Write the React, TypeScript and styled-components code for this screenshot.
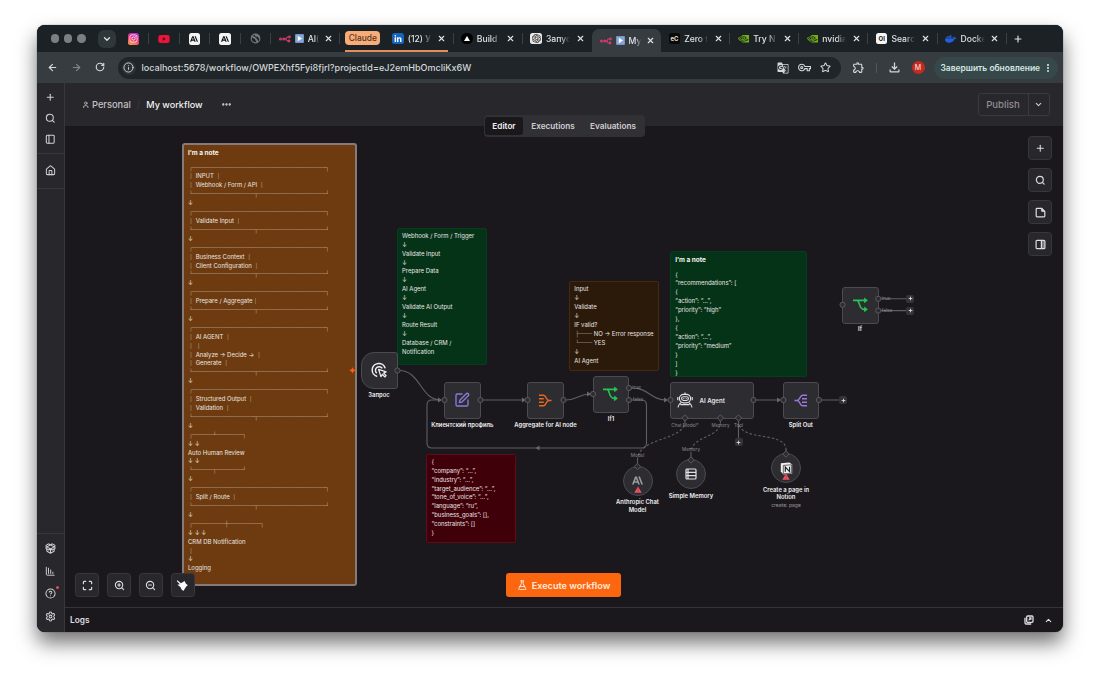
import type { ReactNode } from "react";
import styled, { createGlobalStyle, css } from "styled-components";
import {
  ArrowLeft,
  ArrowRight,
  ChartColumnDecreasing,
  ChevronDown,
  ChevronUp,
  CircleQuestionMark,
  Ellipsis,
  EllipsisVertical,
  FlaskConical,
  House,
  Info,
  Maximize,
  PackageOpen,
  PanelLeft,
  Plus,
  RotateCw,
  Search,
  Settings,
  SquarePen,
  Star,
  User,
  X,
  ZoomIn,
  ZoomOut,
} from "lucide-react";
import { FaDocker, FaInstagram, FaLinkedinIn, FaYoutube } from "react-icons/fa";
import { MdGTranslate, MdOutlineExtension, MdOutlineFileDownload, MdOutlineVpnKey } from "react-icons/md";
import { SiAnthropic, SiNvidia, SiOpenai } from "react-icons/si";

const GlobalStyle = createGlobalStyle`
  * {
    box-sizing: border-box;
  }

  body {
    margin: 0;
    background: #ffffff;
    font-family: Inter, "Noto Sans", sans-serif;
    overflow: hidden;
  }

  svg {
    display: block;
    flex-shrink: 0;
  }
`;

const Desktop = styled.div`
  width: 1100px;
  height: 681px;
  padding: 25px 37px 49px;
`;

const Window = styled.div`
  display: flex;
  flex-direction: column;
  height: 607px;
  border-radius: 8px;
  overflow: hidden;
  background: #1a181c;
  box-shadow: 0 0 1px rgba(0, 0, 0, 0.8), 0 11px 20px rgba(0, 0, 0, 0.55);
`;

/* browser tabs */

const TabBar = styled.div`
  display: flex;
  align-items: center;
  height: 27px;
  padding-left: 13.5px;
  background: #1b2124;
  color: #dfe3e5;
`;

const TrafficLights = styled.div`
  display: flex;
  gap: 4.8px;
  margin-right: 12px;
`;

const Light = styled.span`
  width: 8.6px;
  height: 8.6px;
  border-radius: 50%;
  background: #7b7f81;
`;

const TabSearch = styled.div`
  display: grid;
  place-items: center;
  width: 18px;
  height: 18px;
  margin-right: 2.8px;
  border-radius: 6px;
  background: #30373a;
`;

const PinnedTab = styled.div`
  display: grid;
  place-items: center;
  width: 30.5px;
  height: 11px;
  border-right: 1px solid #3a4144;
`;

const Tab = styled.div<{ $active?: boolean; $divider?: boolean }>`
  position: relative;
  display: flex;
  align-items: center;
  flex-shrink: 0;
  width: 69.1px;
  height: ${({ $active }) => ($active ? "23px" : "11px")};
  margin-top: ${({ $active }) => ($active ? "4px" : "0")};
  padding-left: 7.5px;
  border-right: 1px solid ${({ $divider }) => ($divider ? "#3a4144" : "transparent")};

  ${({ $active }) =>
    $active &&
    css`
      border-radius: 7px 7px 0 0;
      background: #363c40;
      border-right: 0;
    `}
`;

const TabTitle = styled.span<{ $width: number }>`
  width: ${({ $width }) => $width}px;
  margin-left: 4px;
  overflow: hidden;
  white-space: nowrap;
  font-size: 8.6px;
  font-weight: 500;
  line-height: 12px;
  mask-image: linear-gradient(90deg, #000 60%, transparent);
`;

const TabClose = styled.span`
  margin-left: auto;
  margin-right: 6.5px;
`;

const TabGroup = styled.div`
  position: relative;
  display: flex;
  align-items: center;
  height: 27px;

  &::after {
    content: "";
    position: absolute;
    left: 5px;
    right: 6px;
    bottom: 0.5px;
    height: 1.5px;
    background: #dc905b;
  }
`;

const GroupChip = styled.span`
  margin: 0 4.5px 1px 5px;
  width: 35px;
  height: 14.5px;
  border-radius: 4px;
  background: #f8ac77;
  color: #54341f;
  font-size: 8.4px;
  font-weight: 500;
  line-height: 14.5px;
  text-align: center;
`;

const Favicon = styled.span<{ $bg: string; $color?: string; $round?: boolean }>`
  display: grid;
  place-items: center;
  flex-shrink: 0;
  width: 11.5px;
  height: 11.5px;
  border-radius: ${({ $round }) => ($round ? "50%" : "2.5px")};
  background: ${({ $bg }) => $bg};
  color: ${({ $color }) => $color ?? "#111"};
  font-size: 6px;
  font-weight: 700;
`;

const FaviconPair = styled.span`
  display: flex;
  align-items: center;
  gap: 4px;
`;

const NewTab = styled.span`
  margin-left: 6px;
`;

/* browser toolbar */

const Toolbar = styled.div`
  display: flex;
  align-items: center;
  height: 31px;
  background: #363c40;
  color: #d3d8da;
`;

const NavButtons = styled.div`
  display: flex;
  gap: 13px;
  padding-left: 9.5px;
  width: 81px;
`;

const AddressBar = styled.div`
  display: flex;
  align-items: center;
  width: 723px;
  height: 22px;
  padding: 0 10px 0 3.5px;
  border-radius: 11px;
  background: #1f2528;
`;

const SiteInfo = styled.span`
  display: grid;
  place-items: center;
  width: 14px;
  height: 14px;
  border-radius: 50%;
  background: #2c3336;
`;

const Url = styled.span`
  margin-left: 6px;
  margin-right: auto;
  font-size: 9.04px;
  font-weight: 500;
  line-height: 14px;
`;

const AddressActions = styled.div`
  display: flex;
  align-items: center;
  gap: 9px;
`;

const Extensions = styled.span`
  margin-left: 11px;
`;

const ToolbarDivider = styled.span`
  width: 1px;
  height: 10px;
  margin: 0 10.5px;
  background: #50575a;
`;

const Avatar = styled.span`
  display: grid;
  place-items: center;
  width: 13px;
  height: 13px;
  margin: 0 9px 0 9.5px;
  border-radius: 50%;
  background: #c52b1d;
  color: #f6d9d4;
  font-size: 7px;
  font-weight: 500;
`;

const UpdateChip = styled.div`
  display: flex;
  align-items: center;
  justify-content: space-between;
  width: 124.5px;
  height: 22px;
  padding: 0 5px 0 7px;
  border-radius: 11px;
  background: #364849;
  color: #d5e6e5;
  font-size: 8.45px;
  font-weight: 600;
  white-space: nowrap;
`;

/* application */

const AppShell = styled.div`
  display: flex;
  flex: 1;
  min-height: 0;
`;

const Sidebar = styled.nav`
  display: flex;
  flex-direction: column;
  justify-content: space-between;
  width: 28px;
  border-right: 1px solid #38373b;
  background: #28272b;
  color: #d0cfd3;
`;

const SidebarGroup = styled.div<{ $gap: number; $pad: string; $bottom?: boolean }>`
  display: flex;
  flex-direction: column;
  align-items: center;
  gap: ${({ $gap }) => $gap}px;
  padding: ${({ $pad }) => $pad};
  border: 0 solid #38373b;
  border-width: ${({ $bottom }) => ($bottom ? "1px 0 0" : "0 0 1px")};
`;

const HelpItem = styled.span`
  position: relative;

  &::after {
    content: "";
    position: absolute;
    top: -2.5px;
    right: -3px;
    width: 3px;
    height: 3px;
    border-radius: 50%;
    background: #e24a62;
  }
`;

const Main = styled.main`
  display: flex;
  flex: 1;
  flex-direction: column;
  min-width: 0;
`;

const Header = styled.header`
  position: relative;
  z-index: 2;
  display: flex;
  align-items: center;
  height: 43px;
  padding: 0 13.5px 0 16.5px;
  background: #28272b;
  color: #dcdbde;
  font-size: 9.6px;
  font-weight: 500;
`;

const Crumb = styled.span<{ $dim?: boolean }>`
  display: flex;
  align-items: center;
  gap: 3px;
  color: ${({ $dim }) => ($dim ? "#c3c2c6" : "#f1f1f2")};
  font-size: ${({ $dim }) => ($dim ? "9.3px" : "9.1px")};
`;

const CrumbSlash = styled.span`
  width: 15.5px;
  color: #38373b;
  text-align: center;
`;

const MoreButton = styled.span`
  margin-left: 18px;
  color: #dddddf;
`;

const PublishButton = styled.div`
  display: grid;
  grid-template-columns: 49px 21px;
  height: 23px;
  margin-left: auto;
  border: 1px solid #3b3a3e;
  border-radius: 3px;
  color: #8f8e93;

  & > span {
    display: grid;
    place-items: center;
  }

  & > span + span {
    border-left: 1px solid #3b3a3e;
    color: #cfced2;
  }
`;

const ViewSwitch = styled.div`
  position: absolute;
  top: 32px;
  left: 418.5px;
  display: flex;
  height: 21.5px;
  padding: 1.5px;
  border-radius: 4px;
  background: #313035;
`;

const ViewOption = styled.span<{ $width: number; $active?: boolean }>`
  width: ${({ $width }) => $width}px;
  border-radius: 3px;
  background: ${({ $active }) => ($active ? "#19181b" : "transparent")};
  color: ${({ $active }) => ($active ? "#f3f3f4" : "#cfced1")};
  font-size: 8.2px;
  font-weight: 600;
  line-height: 18.5px;
  text-align: center;
`;

const Canvas = styled.section`
  position: relative;
  flex: 1;
  overflow: hidden;
  background: #1a181c;
`;

/* the diagram is panned by the place of the canvas in the screen */
const Viewport = styled.div`
  position: absolute;
  inset: 0;
  width: 1100px;
  height: 681px;
  transform: translate(-65px, -126px);
`;

const EdgeLayer = styled.svg`
  position: absolute;
  inset: 0;
  pointer-events: none;
`;

interface BoxProps {
  $x: number;
  $y: number;
  $w: number;
  $h: number;
}

const placed = css<BoxProps>`
  position: absolute;
  left: ${({ $x }) => $x}px;
  top: ${({ $y }) => $y}px;
  width: ${({ $w }) => $w}px;
  height: ${({ $h }) => $h}px;
`;

const Sticky = styled.div<BoxProps & { $bg: string; $border: string; $selected?: boolean; $padTop: number }>`
  ${placed}
  padding: ${({ $padTop }) => $padTop}px 0 0 ${({ $selected }) => ($selected ? "4px" : "4.3px")};
  border: ${({ $selected }) => ($selected ? "2px" : "1px")} solid ${({ $border }) => $border};
  border-radius: ${({ $selected }) => ($selected ? "3px" : "2px")};
  background: ${({ $bg }) => $bg};
  color: #ebe6e3;
`;

const StickyTitle = styled.div`
  height: 14.75px;
  color: #f8f5f2;
  font-size: 6.5px;
  font-weight: 700;
  line-height: 8.91px;
`;

const StickyLine = styled.div`
  height: 8.91px;
  overflow: visible;
  font-size: 5.96px;
  line-height: 8.91px;
  white-space: pre;
`;

const BoxGlyphs = styled.span`
  font-family: "Noto Sans CJK SC", sans-serif;
  font-size: 5.94px;
  font-weight: 500;
  line-height: 0;
`;

const NodeCard = styled.div<BoxProps & { $trigger?: boolean; $round?: boolean; $wide?: boolean }>`
  ${placed}
  display: flex;
  align-items: center;
  justify-content: ${({ $wide }) => ($wide ? "flex-start" : "center")};
  gap: 6.5px;
  padding-left: ${({ $wide }) => ($wide ? "6px" : "0")};
  border: 1.5px solid #4c4b4f;
  border-radius: ${({ $trigger, $round }) => ($round ? "50%" : $trigger ? "13px 3px 3px 13px" : "3px")};
  background: #2d2c30;
  color: #e6e6e8;
  font-size: 6.1px;
  font-weight: 600;
`;

const NodeLabel = styled.div<{ $x: number; $y: number }>`
  position: absolute;
  left: ${({ $x }) => $x - 45}px;
  top: ${({ $y }) => $y}px;
  width: 90px;
  color: #efeff1;
  font-size: 5.88px;
  font-weight: 600;
  line-height: 7.2px;
  text-align: center;
  white-space: pre-line;
`;

const NodeSubtitle = styled.div`
  margin-top: 1.4px;
  color: #98979c;
  font-size: 5px;
  font-weight: 400;
`;

const PortLabel = styled.span<{ $x: number; $y: number }>`
  position: absolute;
  left: ${({ $x }) => $x}px;
  top: ${({ $y }) => $y}px;
  transform: translate(-50%, -50%);
  color: #8b8a8f;
  font-size: 4.6px;
  line-height: 6px;
  white-space: nowrap;
`;

const AddPort = styled.span<{ $x: number; $y: number }>`
  position: absolute;
  left: ${({ $x }) => $x - 4}px;
  top: ${({ $y }) => $y - 4}px;
  display: grid;
  place-items: center;
  width: 8px;
  height: 8px;
  border-radius: 2px;
  background: #343337;
  color: #e2e2e4;
`;

const WarningMark = styled.svg`
  position: absolute;
  left: 50%;
  bottom: 2px;
  transform: translateX(-50%);
`;

const ControlColumn = styled.div`
  position: absolute;
  top: 10px;
  right: 11px;
  display: flex;
  flex-direction: column;
  gap: 8px;
`;

const ControlRow = styled.div`
  position: absolute;
  left: 10.4px;
  bottom: 10px;
  display: flex;
  gap: 7.8px;
`;

const ControlButton = styled.span`
  display: grid;
  place-items: center;
  width: 24px;
  height: 24px;
  border: 1px solid #38373b;
  border-radius: 3.5px;
  background: #28272b;
  color: #dddde0;
`;

const ExecuteButton = styled.div`
  position: absolute;
  left: 441px;
  bottom: 10px;
  display: flex;
  align-items: center;
  justify-content: center;
  gap: 4.5px;
  width: 115px;
  height: 24px;
  border-radius: 3px;
  background: #fc660e;
  color: #ffe9dc;
  font-size: 9.15px;
  font-weight: 600;
`;

const LogsBar = styled.footer`
  display: flex;
  align-items: center;
  gap: 10px;
  height: 25px;
  padding: 0 10px 0 5px;
  border-top: 1px solid #343337;
  color: #dfdfe1;
  font-size: 8.3px;
  font-weight: 600;

  & > :first-child {
    margin-right: auto;
  }
`;

const N8nLogo = () => (
  <svg width="12" height="8" viewBox="0 0 24 14" fill="none" stroke="#d33c6b" strokeWidth="2.4">
    <circle cx="3" cy="7" r="1.8" />
    <circle cx="9.5" cy="7" r="1.8" />
    <path d="M11 7h2c2 0 2-4 4-4h2M13 7c2 0 2 4 4 4h2" />
    <circle cx="21" cy="3" r="1.6" />
    <circle cx="20" cy="11" r="1.6" />
  </svg>
);

const PlayBadge = () => (
  <svg width="9" height="9" viewBox="0 0 9 9">
    <rect width="9" height="9" rx="1" fill="#6d8fc4" />
    <rect x="0.8" y="0.8" width="7.4" height="7.4" fill="#88a6d4" />
    <path d="M2.8 1.8 7 4.5 2.8 7.2z" fill="#fff" />
  </svg>
);

const TriangleLogo = () => (
  <svg width="6" height="5" viewBox="0 0 6 5">
    <path d="M3 0 6 5H0z" fill="#fff" />
  </svg>
);

const GlobeIcon = () => (
  <svg width="11" height="11" viewBox="0 0 24 24" fill="none" stroke="#73797c" strokeWidth="2.4">
    <circle cx="12" cy="12" r="9.5" />
    <path d="M4 8c3-1 4 3 7 3s1 4 3 4 2 4 0 6M13 3c-2 3 2 4 4 3s3 5 4 5" strokeWidth="4" />
  </svg>
);

const NoteIcon = () => (
  <svg width="11" height="11" viewBox="0 0 11 11" fill="none" stroke="currentColor" strokeWidth="1.2">
    <path d="M2 1.3h4.6l3.2 3.1V9q0 .8-.8.8H2q-.8 0-.8-.8V2.1q0-.8.8-.8z" strokeLinejoin="round" />
    <path d="M6.4 1.3v2.4q0 .9.9.9h2.5z" fill="currentColor" strokeWidth=".6" />
  </svg>
);

const SidePanelIcon = () => (
  <svg width="11" height="11" viewBox="0 0 11 11" fill="none" stroke="currentColor" strokeWidth="1.2">
    <rect x="1.1" y="1.3" width="8.8" height="8.4" rx="1" />
    <path d="M6.4 1.3v8.4" />
    <path d="M6.8 1.8h2.6v7.4H6.8z" fill="currentColor" fillOpacity=".45" stroke="none" />
  </svg>
);

const PopOutIcon = () => (
  <svg width="10" height="10" viewBox="0 0 10 10" fill="none" stroke="currentColor" strokeWidth="1.3">
    <rect x="2.7" y="1" width="6.3" height="6.3" rx="1" />
    <path d="M1 2.8v5q0 1.2 1.2 1.2h5" />
    <path d="M4.6 5.4 7 3M5.1 2.9H7v1.9" strokeWidth="1.1" />
  </svg>
);

const MemoryIcon = () => (
  <svg width="12" height="12" viewBox="0 0 12 12" fill="none" stroke="#e2e2e4" strokeWidth="1.2">
    <rect x="1" y="1" width="10" height="10" rx="1" />
    <path d="M1 4.3h10M1 7.7h10M3 1v10" />
  </svg>
);

const BranchIcon = () => (
  <svg width="17" height="16" viewBox="0 0 17 16" fill="none" stroke="#24c653" strokeWidth="1.6">
    <path d="M1 3.4h13M5 3.4c3 0 1.5 9 7 9h2" />
    <path d="M12.5 1.2 15.4 3.4l-2.9 2.2zM12.5 10.2l2.9 2.2-2.9 2.2z" fill="#24c653" strokeWidth="0.8" />
  </svg>
);

const AggregateIcon = () => (
  <svg width="14" height="13" viewBox="0 0 14 13" fill="none" stroke="#e8651f" strokeWidth="1.5">
    <path d="M1 1.2h4.5C8.4 1.2 7.8 6.5 11 6.5 7.8 6.5 8.4 11.8 5.5 11.8H1M1 4.7h4.8M1 8.3h4.8M9.5 6.5h4" />
  </svg>
);

const SplitIcon = () => (
  <svg width="14" height="13" viewBox="0 0 14 13" fill="none" stroke="#9a78dc" strokeWidth="1.5">
    <path d="M13 1.2H8.6C5.6 1.2 6.3 6.5 3 6.5c3.3 0 2.6 5.3 5.6 5.3H13M13 4.7H8M13 8.3H8M4.5 6.5h-4" />
  </svg>
);

const TriggerIcon = () => (
  <svg width="17" height="17" viewBox="0 0 17 17" fill="none" stroke="#ededee" strokeWidth="1.5">
    <path d="M6.2 14.4A6.6 6.6 0 1 1 14.2 6.4" />
    <path d="M5.8 11.2A3.7 3.7 0 1 1 11.3 6.4" />
    <path d="m7.6 7.4 2.3 7.2 1.5-2.3 2.3 2.6 1.4-1.3-2.4-2.5 2.4-1.2z" strokeLinejoin="round" strokeWidth="1.3" />
  </svg>
);

const RobotIcon = () => (
  <svg width="16" height="16" viewBox="0 0 16 16" fill="none" stroke="#e4e4e6" strokeWidth="1.15">
    <path d="M8 0.6v1.8" />
    <rect x="2.4" y="2.4" width="11.2" height="8.4" rx="4.2" />
    <rect x="4.6" y="4.7" width="6.8" height="3.8" rx="1.9" />
    <path d="M6.4 6.6h.9M8.7 6.6h.9M.8 5v3.2M15.2 5v3.2M3.4 12.6h9.2M1 15.4c.2-2.2 1.2-3.5 3-4.6M15 15.4c-.2-2.2-1.2-3.5-3-4.6" />
  </svg>
);

const NotionIcon = () => (
  <svg width="13" height="13" viewBox="0 0 13 13">
    <path d="M.8 1.2 9.4.5l2.8 2v9.2l-8.9.7L.8 9.6z" fill="#f0f0f1" />
    <path d="M3.3 3.4 11.6 2.8v8.4l-8.3.6z" fill="none" stroke="#29282c" strokeWidth=".7" />
    <path d="M5.3 9.7V5l4.3 4.6V4.8" fill="none" stroke="#222" strokeWidth="1.2" />
  </svg>
);

const BroomIcon = () => (
  <svg width="13" height="13" viewBox="0 0 13 13" fill="#fbfbfb">
    <path d="M1.4 1.3 4.9 4.3 8.6 2l1.2 2.6 2 1.6-1.6 1.2L7.4 12 5.6 10.6 4.4 8 1.4 5.8 3.9 5.2.7 2z" />
  </svg>
);

const Warning = () => (
  <WarningMark width="8" height="7" viewBox="0 0 8 7">
    <path d="M4 .4 7.7 6.7H.3z" fill="#ef5463" />
    <path d="M4 2.5v2M4 5.2v.8" stroke="#a32a38" strokeWidth=".7" />
  </WarningMark>
);

const rule = (count: number) => "─".repeat(count);
const top = `┌${rule(22)}┐`;
const bottom = `└${rule(10)}┬${rule(11)}┘`;

const pipelineNote = [
  top,
  "│ INPUT │",
  "│ Webhook / Form / API │",
  bottom,
  "↓",
  top,
  "│ Validate Input │",
  bottom,
  "↓",
  top,
  "│ Business Context │",
  "│ Client Configuration │",
  bottom,
  "↓",
  top,
  "│ Prepare / Aggregate│",
  bottom,
  "↓",
  top,
  "│ AI AGENT │",
  "│ │",
  "│ Analyze → Decide → │",
  "│ Generate │",
  bottom,
  "↓",
  top,
  "│ Structured Output │",
  "│ Validation │",
  bottom,
  "↓",
  `┌${rule(3)}┴${rule(4)}┐`,
  "↓ ↓",
  "Auto Human Review",
  "↓ ↓",
  `└${rule(3)}┬${rule(4)}┘`,
  "↓",
  top,
  "│ Split / Route │",
  bottom,
  "↓",
  `┌${rule(5)}┼${rule(5)}┐`,
  "↓ ↓ ↓",
  "CRM DB Notification",
  "│",
  "↓",
  "Logging",
];

const flowNote = [
  "Webhook / Form / Trigger",
  "↓",
  "Validate Input",
  "↓",
  "Prepare Data",
  "↓",
  "AI Agent",
  "↓",
  "Validate AI Output",
  "↓",
  "Route Result",
  "↓",
  "Database / CRM /",
  "Notification",
];

const branchNote = ["Input", "↓", "Validate", "↓", "IF valid?", "├── NO → Error response", "└── YES", "↓", "AI Agent"];

const outputNote = [
  "{",
  "“recommendations”: [",
  "{",
  "“action”: “…”,",
  "“priority”: “high”",
  "},",
  "{",
  "“action”: “…”,",
  "“priority”: “medium”",
  "}",
  "]",
  "}",
];

const profileNote = [
  "{",
  "“company”: “…”,",
  "“industry”: “…”,",
  "“target_audience”: “…”,",
  "“tone_of_voice”: “…”,",
  "“language”: “ru”,",
  "“business_goals”: [],",
  "“constraints”: []",
  "}",
];

const NoteText = ({ lines }: { lines: string[] }) => (
  <>
    {lines.map((line, i) => (
      <StickyLine key={i}>
        {line.split(/([─-╿]+)/).map((part, j) =>
          /[─-╿]/.test(part) ? <BoxGlyphs key={j}>{part}</BoxGlyphs> : part
        )}
      </StickyLine>
    ))}
  </>
);

interface BrowserTabProps {
  icon: ReactNode;
  title: string;
  width?: number;
  active?: boolean;
  divider?: boolean;
}

const BrowserTab = ({ icon, title, width = 24, active, divider = true }: BrowserTabProps) => (
  <Tab $active={active} $divider={divider}>
    {icon}
    <TabTitle $width={width}>{title}</TabTitle>
    <TabClose>
      <X size={9} strokeWidth={3} />
    </TabClose>
  </Tab>
);

const n8nIcon = (
  <FaviconPair>
    <N8nLogo />
    <PlayBadge />
  </FaviconPair>
);

const claudeIcon = (
  <Favicon $bg="#f4f4f4">
    <SiAnthropic size={8} />
  </Favicon>
);

const Port = ({ x, y }: { x: number; y: number }) => (
  <circle cx={x} cy={y} r="2.6" fill="#2d2c30" stroke="#5b5a5f" strokeWidth="1" />
);

const Diamond = ({ x, y }: { x: number; y: number }) => (
  <path d={`M${x} ${y - 3.2}l3.2 3.2-3.2 3.2-3.2-3.2z`} fill="#2d2c30" stroke="#5b5a5f" strokeWidth="1" />
);

const Arrow = ({ x, y, left }: { x: number; y: number; left?: boolean }) => (
  <path d={left ? `M${x} ${y}l4-2.6v5.2z` : `M${x} ${y}l-4-2.6v5.2z`} fill="#68676c" />
);

const WorkflowDiagram = () => (
  <Viewport>
    <Sticky $x={182} $y={143} $w={175} $h={442.5} $bg="#6d3b0f" $border="#857b7b" $selected $padTop={3.8}>
      <StickyTitle>I’m a note</StickyTitle>
      <NoteText lines={pipelineNote} />
    </Sticky>
    <Sticky $x={396.7} $y={227.5} $w={90} $h={137} $bg="#053318" $border="#083c1e" $padTop={3.3}>
      <NoteText lines={flowNote} />
    </Sticky>
    <Sticky $x={569} $y={281} $w={90} $h={89.5} $bg="#2b1a0a" $border="#47290c" $padTop={3.4}>
      <NoteText lines={branchNote} />
    </Sticky>
    <Sticky $x={670} $y={251} $w={137} $h={125.7} $bg="#053318" $border="#083c1e" $padTop={3.8}>
      <StickyTitle>I’m a note</StickyTitle>
      <NoteText lines={outputNote} />
    </Sticky>
    <Sticky $x={426.3} $y={453.5} $w={90} $h={89.5} $bg="#40000a" $border="#5e0c18" $padTop={3.3}>
      <NoteText lines={profileNote} />
    </Sticky>

    <EdgeLayer width="1100" height="681" fill="none" stroke="#5f5e63" strokeWidth="1.1">
      <path d="M399 370.5C421 370.5 420 400 441 400" />
      <path d="M483 400h42M566 400c11 0 12-6 25-6M632 388c17 0 18 12 35 12M756 400h24M822 400h18" />
      <path d="M632 400h9.5q5 0 5 5v38q0 5-5 5H432q-5 0-5-5v-38q0-5 5-5h9" />
      <path d="M881 298.8h26M881 310.6h26M738.5 421v18" />
      <g strokeDasharray="2.5 2">
        <path d="M685 421c0 20-47.5 16-47.5 39" />
        <path d="M720.5 421c0 18-29.5 14-29.5 32" />
        <path d="M738.5 421c0 22 47.5 9 47.5 29" />
      </g>
      <path d="M637.5 460v5M691 453v5M786 449v4" />
      <g stroke="none">
        <Arrow x={442} y={400} />
        <Arrow x={526} y={400} />
        <Arrow x={591} y={394} />
        <Arrow x={668} y={400} />
        <Arrow x={781} y={400} />
        <Arrow x={535.5} y={448} left />
      </g>
    </EdgeLayer>

    <NodeCard $x={361} $y={352} $w={36.5} $h={36.5} $trigger>
      <TriggerIcon />
    </NodeCard>
    <NodeCard $x={444} $y={382} $w={36.5} $h={36.5}>
      <SquarePen size={16} color="#877ddc" />
    </NodeCard>
    <NodeCard $x={527} $y={382} $w={36.5} $h={36.5}>
      <AggregateIcon />
    </NodeCard>
    <NodeCard $x={592.7} $y={376} $w={36.5} $h={36.5}>
      <BranchIcon />
    </NodeCard>
    <NodeCard $x={670} $y={382} $w={84} $h={36.5} $wide>
      <RobotIcon />
      AI Agent
    </NodeCard>
    <NodeCard $x={782.8} $y={382} $w={36.5} $h={36.5}>
      <SplitIcon />
    </NodeCard>
    <NodeCard $x={842} $y={287} $w={36.5} $h={36.5}>
      <BranchIcon />
    </NodeCard>
    <NodeCard $x={622.5} $y={465.5} $w={30} $h={30} $round>
      <SiAnthropic size={11} color="#9b9ba1" />
      <Warning />
    </NodeCard>
    <NodeCard $x={676} $y={459.3} $w={30} $h={30} $round>
      <MemoryIcon />
    </NodeCard>
    <NodeCard $x={771} $y={453.3} $w={30} $h={30} $round>
      <NotionIcon />
      <Warning />
    </NodeCard>

    <EdgeLayer width="1100" height="681">
      <Port x={397.5} y={370.5} />
      <Port x={444.5} y={400} />
      <Port x={480.5} y={400} />
      <Port x={527.5} y={400} />
      <Port x={563.5} y={400} />
      <Port x={593} y={394} />
      <Port x={629} y={388} />
      <Port x={629} y={400} />
      <Port x={670.5} y={400} />
      <Port x={753.5} y={400} />
      <Port x={783.3} y={400} />
      <Port x={819} y={400} />
      <Port x={842.5} y={304.8} />
      <Port x={878.3} y={298.8} />
      <Port x={878.3} y={310.6} />
      <Diamond x={685} y={418} />
      <Diamond x={720.5} y={418} />
      <Diamond x={738.5} y={418} />
      <Diamond x={637.5} y={466.5} />
      <Diamond x={691} y={460} />
      <Diamond x={786} y={454} />
      <path d="M352.5 367.2q.6 2.6 3.2 3.2-2.6.6-3.2 3.2-.6-2.6-3.2-3.2 2.6-.6 3.2-3.2z" fill="#ff5a12" />
    </EdgeLayer>

    <AddPort $x={843} $y={400}>
      <Plus size={5} strokeWidth={4} />
    </AddPort>
    <AddPort $x={738.5} $y={442}>
      <Plus size={5} strokeWidth={4} />
    </AddPort>
    <AddPort $x={910} $y={298.8}>
      <Plus size={5} strokeWidth={4} />
    </AddPort>
    <AddPort $x={910} $y={310.6}>
      <Plus size={5} strokeWidth={4} />
    </AddPort>

    <PortLabel $x={636.5} $y={388.2}>true</PortLabel>
    <PortLabel $x={638} $y={400.2}>false</PortLabel>
    <PortLabel $x={886} $y={299}>true</PortLabel>
    <PortLabel $x={887} $y={310.8}>false</PortLabel>
    <PortLabel $x={685} $y={426.3}>Chat Model*</PortLabel>
    <PortLabel $x={720.5} $y={426.3}>Memory</PortLabel>
    <PortLabel $x={738.5} $y={426.3}>Tool</PortLabel>
    <PortLabel $x={637.5} $y={456.3}>Model</PortLabel>
    <PortLabel $x={691} $y={450.3}>Memory</PortLabel>

    <NodeLabel $x={379} $y={391}>Запрос</NodeLabel>
    <NodeLabel $x={462.3} $y={420.8}>Клиентский профиль</NodeLabel>
    <NodeLabel $x={545.5} $y={420.8}>Aggregate for AI node</NodeLabel>
    <NodeLabel $x={611} $y={414.8}>If1</NodeLabel>
    <NodeLabel $x={800.8} $y={420.8}>Split Out</NodeLabel>
    <NodeLabel $x={860} $y={325.4}>If</NodeLabel>
    <NodeLabel $x={637.5} $y={498.3}>{"Anthropic Chat\nModel"}</NodeLabel>
    <NodeLabel $x={691} $y={492.2}>Simple Memory</NodeLabel>
    <NodeLabel $x={786} $y={486.2}>
      {"Create a page in\nNotion"}
      <NodeSubtitle>create: page</NodeSubtitle>
    </NodeLabel>
  </Viewport>
);

const BrowserChrome = () => (
  <>
    <TabBar>
      <TrafficLights>
        <Light />
        <Light />
        <Light />
      </TrafficLights>
      <TabSearch>
        <ChevronDown size={10} strokeWidth={3} />
      </TabSearch>
      <PinnedTab>
        <Favicon $bg="linear-gradient(20deg, #fdb03c, #f0336d 45%, #a52be0)" $color="#fff">
          <FaInstagram size={9} />
        </Favicon>
      </PinnedTab>
      <PinnedTab>
        <FaYoutube size={12} color="#ef1239" />
      </PinnedTab>
      <PinnedTab>{claudeIcon}</PinnedTab>
      <PinnedTab>{claudeIcon}</PinnedTab>
      <PinnedTab>
        <GlobeIcon />
      </PinnedTab>
      <BrowserTab icon={n8nIcon} title="AI(" width={11} />
      <TabGroup>
        <GroupChip>Claude</GroupChip>
        <BrowserTab
          icon={
            <Favicon $bg="#1764bd" $color="#fff">
              <FaLinkedinIn size={8} />
            </Favicon>
          }
          title="(12) У"
        />
      </TabGroup>
      <BrowserTab
        icon={
          <Favicon $bg="#000" $round>
            <TriangleLogo />
          </Favicon>
        }
        title="Build"
      />
      <BrowserTab
        icon={
          <Favicon $bg="#e9e9ea">
            <SiOpenai size={9} />
          </Favicon>
        }
        title="Запус"
        divider={false}
      />
      <BrowserTab icon={n8nIcon} title="My" width={12} active />
      <BrowserTab
        icon={
          <Favicon $bg="#090909" $color="#e8e0dd">
            eC
          </Favicon>
        }
        title="Zero t"
      />
      <BrowserTab icon={<SiNvidia size={11.5} color="#6fae14" />} title="Try N" />
      <BrowserTab icon={<SiNvidia size={11.5} color="#6fae14" />} title="nvidia" />
      <BrowserTab icon={<Favicon $bg="#f5f5f5">OI</Favicon>} title="Searc" />
      <BrowserTab icon={<FaDocker size={11.5} color="#2460dd" />} title="Docke" />
      <NewTab>
        <Plus size={10} strokeWidth={2.8} />
      </NewTab>
    </TabBar>
    <Toolbar>
      <NavButtons>
        <ArrowLeft size={11} strokeWidth={2.4} />
        <ArrowRight size={11} strokeWidth={2.4} color="#80878a" />
        <RotateCw size={10} strokeWidth={2.8} />
      </NavButtons>
      <AddressBar>
        <SiteInfo>
          <Info size={11} />
        </SiteInfo>
        <Url>localhost:5678/workflow/OWPEXhf5Fyi8fjrl?projectId=eJ2emHbOmcliKx6W</Url>
        <AddressActions>
          <MdGTranslate size={12} />
          <MdOutlineVpnKey size={13} />
          <Star size={11} strokeWidth={2.2} />
        </AddressActions>
      </AddressBar>
      <Extensions>
        <MdOutlineExtension size={13} />
      </Extensions>
      <ToolbarDivider />
      <MdOutlineFileDownload size={15} />
      <Avatar>M</Avatar>
      <UpdateChip>
        Завершить обновление
        <EllipsisVertical size={10} strokeWidth={3} />
      </UpdateChip>
    </Toolbar>
  </>
);

const App = () => (
  <Desktop>
    <GlobalStyle />
    <Window>
      <BrowserChrome />
      <AppShell>
        <Sidebar>
          <div>
            <SidebarGroup $gap={10.7} $pad="9px 0 8.5px">
              <Plus size={10.5} strokeWidth={2.4} />
              <Search size={10.5} strokeWidth={2.4} />
              <PanelLeft size={10.5} strokeWidth={2.4} />
            </SidebarGroup>
            <SidebarGroup $gap={0} $pad="11px 0 11.5px">
              <House size={11} strokeWidth={2.2} />
            </SidebarGroup>
          </div>
          <SidebarGroup $gap={11.8} $pad="9px 0 10px" $bottom>
            <PackageOpen size={11} strokeWidth={2.2} />
            <ChartColumnDecreasing size={10.5} strokeWidth={2.2} />
            <HelpItem>
              <CircleQuestionMark size={11} strokeWidth={2.2} />
            </HelpItem>
            <Settings size={11} strokeWidth={2.2} />
          </SidebarGroup>
        </Sidebar>
        <Main>
          <Header>
            <Crumb $dim>
              <User size={7.5} strokeWidth={2.6} />
              Personal
            </Crumb>
            <CrumbSlash>/</CrumbSlash>
            <Crumb>My workflow</Crumb>
            <MoreButton>
              <Ellipsis size={11} strokeWidth={3} />
            </MoreButton>
            <PublishButton>
              <span>Publish</span>
              <span>
                <ChevronDown size={9} strokeWidth={2.8} />
              </span>
            </PublishButton>
            <ViewSwitch>
              <ViewOption $width={38} $active>
                Editor
              </ViewOption>
              <ViewOption $width={60}>Executions</ViewOption>
              <ViewOption $width={60}>Evaluations</ViewOption>
            </ViewSwitch>
          </Header>
          <Canvas>
            <WorkflowDiagram />
            <ControlColumn>
              <ControlButton>
                <Plus size={10.5} strokeWidth={2.4} />
              </ControlButton>
              <ControlButton>
                <Search size={10.5} strokeWidth={2.6} />
              </ControlButton>
              <ControlButton>
                <NoteIcon />
              </ControlButton>
              <ControlButton>
                <SidePanelIcon />
              </ControlButton>
            </ControlColumn>
            <ControlRow>
              <ControlButton>
                <Maximize size={11} strokeWidth={2.6} />
              </ControlButton>
              <ControlButton>
                <ZoomIn size={11} strokeWidth={2.4} />
              </ControlButton>
              <ControlButton>
                <ZoomOut size={11} strokeWidth={2.4} />
              </ControlButton>
              <ControlButton>
                <BroomIcon />
              </ControlButton>
            </ControlRow>
            <ExecuteButton>
              <FlaskConical size={10.5} strokeWidth={2.2} />
              Execute workflow
            </ExecuteButton>
          </Canvas>
          <LogsBar>
            <span>Logs</span>
            <PopOutIcon />
            <ChevronUp size={9} strokeWidth={2.8} />
          </LogsBar>
        </Main>
      </AppShell>
    </Window>
  </Desktop>
);

export default App;
